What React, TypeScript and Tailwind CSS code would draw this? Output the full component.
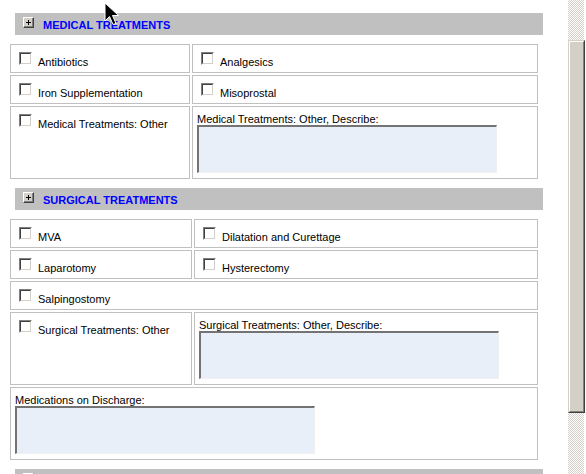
import React from "react";

const font = "font-['Liberation_Sans',Arial,sans-serif]";

function Checkbox() {
  return (
    <div className="w-[13px] h-[13px] shrink-0 border-t border-l border-[#808080] border-b border-r border-b-white border-r-white">
      <div className="w-full h-full border-t border-l border-[#404040] border-b border-r border-b-[#d4d0c8] border-r-[#d4d0c8] bg-white" />
    </div>
  );
}

function CheckCell({ label, className = "", h = "h-[29px]" }: { label: string; className?: string; h?: string }) {
  return (
    <div className={`${h} border border-[#c0c0c0] pl-[8px] pt-[7px] flex items-start ${className}`}>
      <Checkbox />
      <span className="ml-[6px] mt-[4px] leading-[13px] text-[11px] text-black whitespace-nowrap">{label}</span>
    </div>
  );
}

function TextCell({ label, className = "" }: { label: string; className?: string }) {
  return (
    <div className={`h-[73px] border border-[#c0c0c0] pl-[4px] pt-[6px] ${className}`}>
      <div className="h-[12px] leading-[13px] text-[11px] text-black whitespace-nowrap">{label}</div>
      <div className="w-[300px] h-[48px] bg-[#e9eff9] border-t-2 border-l-2 border-[#737373] border-b border-r border-b-[#f0f0f0] border-r-[#f0f0f0]" />
    </div>
  );
}

function PlusBox() {
  return (
    <div className="w-[11px] h-[11px] shrink-0 border-t border-l border-white border-b border-r border-b-[#404040] border-r-[#404040] bg-[#d4d0c8]">
      <div className="relative w-full h-full border-b border-r border-[#808080]">
        <div className="absolute left-[2px] top-[4px] w-[5px] h-[1px] bg-black" />
        <div className="absolute left-[4px] top-[2px] w-[1px] h-[5px] bg-black" />
      </div>
    </div>
  );
}

function Header({ title }: { title: string }) {
  return (
    <div className="ml-[5px] w-[528px] h-[22px] shrink-0 bg-[#c0c0c0] flex items-start pl-[8px] pt-[4px]">
      <PlusBox />
      <span className="ml-[9px] mt-[2px] leading-[13px] text-[11px] font-bold text-[#0000ff] whitespace-nowrap">{title}</span>
    </div>
  );
}

const checker =
  "bg-[repeating-conic-gradient(#d4d0c8_0%_25%,#ffffff_0%_50%)] bg-[length:2px_2px]";

function Scrollbar() {
  return (
    <div className="w-[18px] h-full flex flex-col bg-white">
      <div className={`w-[16px] h-[40px] ${checker}`} />
      <div className="w-[17px] h-[373px] border-t border-l border-[#d4d0c8] border-b border-r border-b-[#404040] border-r-[#404040]">
        <div className="w-full h-full bg-[#d4d0c8] border-t border-l border-white border-b border-r border-b-[#808080] border-r-[#808080]" />
      </div>
      <div className={`w-[16px] flex-1 ${checker}`} />
    </div>
  );
}

function Cursor() {
  return (
    <svg className="absolute left-[104px] top-[2px]" width="17" height="26" viewBox="0 0 17 26">
      <polygon
        points="1,1 1,19 5.5,14.5 9,22.5 12,21.5 8.5,13.5 14.5,13.5"
        fill="#000"
        stroke="#fff"
        strokeWidth="1"
        strokeLinejoin="miter"
      />
    </svg>
  );
}

export default function App() {
  return (
    <div className={`relative w-[586px] h-[474px] overflow-hidden bg-white flex ${font}`}>
      <div className="w-[568px] h-full flex flex-col pl-[10px] pt-[13px]">
        <Header title="MEDICAL TREATMENTS" />
        <div className="mt-[9px] w-[528px] grid grid-cols-[180px_346px] gap-[2px]">
          <CheckCell label="Antibiotics" />
          <CheckCell label="Analgesics" />
          <CheckCell label="Iron Supplementation" />
          <CheckCell label="Misoprostal" />
          <CheckCell label="Medical Treatments: Other" h="h-[73px]" />
          <TextCell label="Medical Treatments: Other, Describe:" />
        </div>
        <div className="mt-[9px]">
          <Header title="SURGICAL TREATMENTS" />
        </div>
        <div className="mt-[9px] w-[528px] grid grid-cols-[182px_344px] gap-[2px]">
          <CheckCell label="MVA" />
          <CheckCell label="Dilatation and Curettage" />
          <CheckCell label="Laparotomy" />
          <CheckCell label="Hysterectomy" />
          <CheckCell label="Salpingostomy" className="col-span-2" />
          <CheckCell label="Surgical Treatments: Other" h="h-[73px]" />
          <TextCell label="Surgical Treatments: Other, Describe:" />
          <TextCell label="Medications on Discharge:" className="col-span-2" />
        </div>
        <div className="mt-[9px]">
          <Header title="" />
        </div>
      </div>
      <Scrollbar />
      <Cursor />
    </div>
  );
}
